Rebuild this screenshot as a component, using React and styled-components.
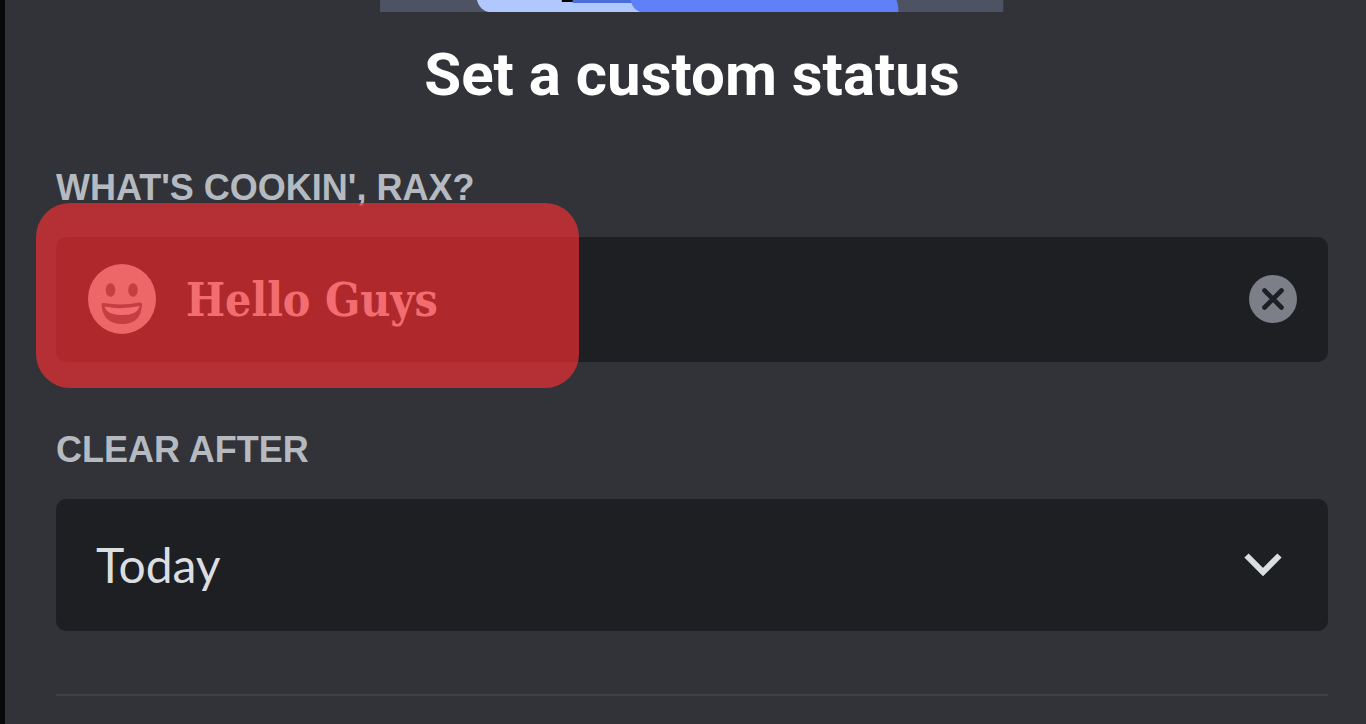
import { useState } from 'react'
import styled, { createGlobalStyle } from 'styled-components'


export default function App() {
  const [status, setStatus] = useState('Hello Guys')
  const [clearAfter, setClearAfter] = useState('today')

  return (
    <>
      <GlobalStyle />
      <Modal>
        <Art viewBox="0 0 624 12" aria-hidden="true">
          <rect width="624" height="12" fill="#4d5362" />
          <path d="M97 0H270V12H109C103 11 99 7 97 0Z" fill="#b1c8ff" />
          <path d="M193 0H262V3H193Z" fill="#4a6fdc" />
          <path d="M182 0H193V2H182Z" fill="#000" />
          <path d="M251 0H517C519 4 519 8 519 12H261C255 10 252 6 251 0Z" fill="#5f80f9" />
        </Art>
        <Title>Set a custom status</Title>

        <Label htmlFor="status">WHAT'S COOKIN', RAX?</Label>
        <StatusField>
          <IconButton type="button" aria-label="Choose emoji">
            <EmojiIcon />
          </IconButton>
          <StatusInput
            id="status"
            value={status}
            onChange={(e) => setStatus(e.target.value)}
          />
          <IconButton type="button" aria-label="Clear status" onClick={() => setStatus('')}>
            <ClearIcon />
          </IconButton>
          <Highlight />
        </StatusField>

        <Label htmlFor="clear-after">CLEAR AFTER</Label>
        <SelectField>
          <Select
            id="clear-after"
            value={clearAfter}
            onChange={(e) => setClearAfter(e.target.value)}
          >
            <option value="today">Today</option>
          </Select>
          <ChevronIcon />
        </SelectField>
        <Divider />
      </Modal>
    </>
  )
}

function EmojiIcon() {
  return (
    <svg width="68" height="70" viewBox="0 0 68 70">
      <ellipse cx="34" cy="35" rx="34" ry="35" fill="#d2d2d4" />
      <ellipse cx="22.5" cy="26" rx="4.8" ry="6.8" fill="#5c5d61" />
      <ellipse cx="45" cy="26" rx="4.8" ry="6.8" fill="#5c5d61" />
      <path d="M13.5 41Q13 38.5 16 39Q34 42 51 38.5Q54.5 38 54 41Q53 60 34 60Q15 60 13.5 41Z" fill="#5c5d61" />
      <path d="M16.5 42.5Q34 46 51.5 42Q50 51 34 51Q19 51 16.5 42.5Z" fill="#e4e4e6" />
    </svg>
  )
}

function ClearIcon() {
  return (
    <svg width="48" height="48" viewBox="0 0 48 48">
      <circle cx="24" cy="24" r="24" fill="#7c7f87" />
      <path d="M15.5 15.5L32.5 32.5M32.5 15.5L15.5 32.5" stroke="#1e1f22" strokeWidth="4.6" strokeLinecap="round" />
    </svg>
  )
}

function ChevronIcon() {
  return (
    <Chevron width="40" height="26" viewBox="0 0 40 26" aria-hidden="true">
      <path d="M3.5 3.5L20 20L36.5 3.5" fill="none" stroke="#dbdee1" strokeWidth="6" />
    </Chevron>
  )
}


const GlobalStyle = createGlobalStyle`
  body {
    margin: 0;
    background: #313338;
  }
  *, *::before, *::after {
    box-sizing: border-box;
  }
`;

const Modal = styled.main`
  display: flex;
  flex-direction: column;
  min-height: 100vh;
  padding: 0 38px 28px 51px;
  border-left: 5px solid #08090a;
  background: #313338;
  font-family: Lato, 'Noto Sans', sans-serif;
`;

const Art = styled.svg`
  display: block;
  width: 49%;
  align-self: center;
`;

const Title = styled.h1`
  margin: 25px 0 59px;
  color: #fff;
  font-family: Roboto, sans-serif;
  font-size: 60px;
  font-weight: 700;
  line-height: 76px;
  text-align: center;
`;

const Label = styled.label`
  margin-bottom: 33px;
  color: #b5bac1;
  font-family: 'Liberation Sans', Arial, sans-serif;
  font-size: 36px;
  font-weight: 700;
  line-height: 32px;
`;

const StatusField = styled.div`
  position: relative;
  display: flex;
  align-items: center;
  height: 125px;
  margin-bottom: 72px;
  padding: 0 31px 0 32px;
  border-radius: 10px;
  background: #1e1f22;
`;

const Highlight = styled.div`
  position: absolute;
  top: -34px;
  left: -20px;
  width: 543px;
  height: 185px;
  border-radius: 34px;
  background: rgba(250, 47, 50, 0.66);
  pointer-events: none;
`;

const IconButton = styled.button`
  display: flex;
  padding: 0;
  border: 0;
  background: none;
  cursor: pointer;
`;

const StatusInput = styled.input`
  flex: 1;
  min-width: 0;
  padding: 2px 30px 0;
  border: 0;
  outline: 0;
  background: none;
  color: #e4e4e6;
  font-family: 'DejaVu Serif Condensed', 'DejaVu Serif', serif;
  font-size: 46px;
  font-weight: 700;
  line-height: 56px;
`;

const SelectField = styled.div`
  position: relative;
  display: flex;
`;

const Select = styled.select`
  flex: 1;
  height: 132px;
  padding: 0 100px 0 40px;
  border: 0;
  border-radius: 10px;
  outline: 0;
  appearance: none;
  background: #1e1f22;
  color: #dbdee1;
  font-family: inherit;
  font-size: 48px;
`;

const Chevron = styled.svg`
  position: absolute;
  top: 53px;
  right: 45px;
  pointer-events: none;
`;

const Divider = styled.hr`
  width: 100%;
  height: 2px;
  margin: 63px 0 0;
  border: 0;
  background: #3f4147;
`;
